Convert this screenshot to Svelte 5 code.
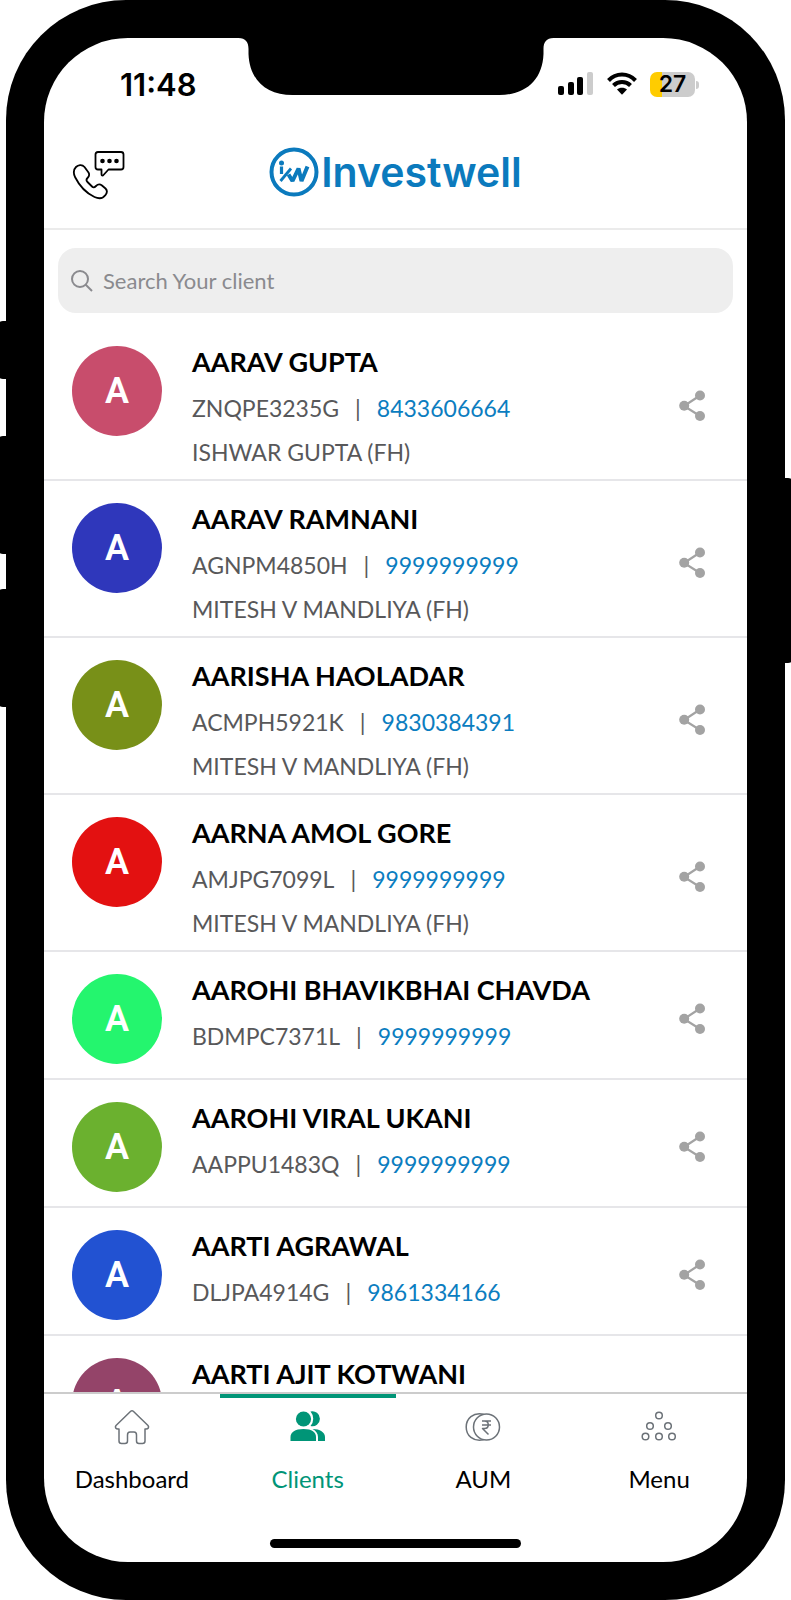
<script>
  let search = "";
  let activeTab = "Clients";

  const tabs = ["Dashboard", "Clients", "AUM", "Menu"];

  const clients = [
    { name: "AARAV GUPTA", pan: "ZNQPE3235G", phone: "8433606664", head: "ISHWAR GUPTA (FH)", color: "#c84d6c" },
    { name: "AARAV RAMNANI", pan: "AGNPM4850H", phone: "9999999999", head: "MITESH V MANDLIYA (FH)", color: "#2f37bb" },
    { name: "AARISHA HAOLADAR", pan: "ACMPH5921K", phone: "9830384391", head: "MITESH V MANDLIYA (FH)", color: "#789018" },
    { name: "AARNA AMOL GORE", pan: "AMJPG7099L", phone: "9999999999", head: "MITESH V MANDLIYA (FH)", color: "#e31111" },
    { name: "AAROHI BHAVIKBHAI CHAVDA", pan: "BDMPC7371L", phone: "9999999999", color: "#24f56e" },
    { name: "AAROHI VIRAL UKANI", pan: "AAPPU1483Q", phone: "9999999999", color: "#6bb12f" },
    { name: "AARTI AGRAWAL", pan: "DLJPA4914G", phone: "9861334166", color: "#2252d2" },
    { name: "AARTI AJIT KOTWANI", color: "#944469" }
  ];

  $: filtered = clients.filter((c) => c.name.includes(search.toUpperCase()));
</script>

<div class="page">
  <div class="phone">
    <span class="side-key mute"></span>
    <span class="side-key vol-up"></span>
    <span class="side-key vol-down"></span>
    <span class="side-key power"></span>

    <div class="screen">
      <svg class="notch" width="315" height="57" viewBox="0 0 315 57" aria-hidden="true">
        <path d="M0 0C7 0 10 4 10 11V16C11 42 28 57 54 57H261C287 57 304 42 305 16V11C305 4 308 0 315 0Z" />
      </svg>

      <div class="status-bar">
        <span class="time">11:48</span>
        <div class="status-icons">
          <svg width="36" height="24" viewBox="0 0 36 24" aria-hidden="true">
            <rect x="0" y="14" width="6" height="9" rx="2" />
            <rect x="10" y="10" width="6" height="13" rx="2" />
            <rect x="19" y="5" width="6" height="18" rx="2" />
            <rect x="29" y="0" width="6" height="23" rx="2" fill="#ccc" />
          </svg>
          <svg width="30" height="24" viewBox="0 0 30 24" fill="none" stroke="#000" stroke-width="4" aria-hidden="true">
            <path d="M1.5 8.5C9 .6 21 .6 28.5 8.5" />
            <path d="M6.5 13.5C11 8.8 19 8.8 23.5 13.5" />
            <path d="M10 17.5C12.5 15.3 17.5 15.3 20 17.5L15 22.8Z" fill="#000" stroke="none" />
          </svg>
          <div class="battery">27</div>
        </div>
      </div>

      <header>
        <button class="support" aria-label="Contact support">
          <svg width="54" height="50" viewBox="0 0 54 50" fill="none" stroke="#000" stroke-width="1.8" stroke-linejoin="round" aria-hidden="true">
            <path d="M26 2H49Q51.5 2 51.5 4.5V17Q51.5 19.5 49 19.5H36.5L31 25.5Q29.5 26 29.5 24V19.5H26Q23.5 19.5 23.5 17V4.5Q23.5 2 26 2Z" />
            <g fill="#000" stroke="none">
              <circle cx="30.5" cy="11" r="2.3" />
              <circle cx="37.5" cy="11" r="2.3" />
              <circle cx="44.5" cy="11" r="2.3" />
            </g>
            <path d="M4 17C6 15 10 14 12.5 17L16.5 22.5C18 25 17 26.5 15.5 28C14 29.5 14 30.5 15.5 32L20 36.5C21.5 38 22.5 37.5 24 36C26 34 28 34 30 35.5L33.5 38.5C36 41 35 43 33.5 45C31 48.5 27 49 22.5 47C14 43 7 35 3 27C1 22.5 2 19 4 17Z" />
          </svg>
        </button>
        <div class="logo">
          <svg width="50" height="50" viewBox="0 0 50 50" fill="none" stroke="#0b7abd" aria-hidden="true">
            <circle cx="25" cy="25" r="22.5" stroke-width="4" />
            <circle cx="12.5" cy="16" r="2.5" fill="#0b7abd" stroke="none" />
            <path d="M12.5 19.500V27" stroke-width="3.2" />
            <path d="M11.5 34L22 21.5" stroke-width="2.8" />
            <path d="M19.5 27.5L23.5 34L29.5 21.5L32.5 34L38.5 19.5" stroke-width="4" stroke-linejoin="bevel" />
          </svg>
          <span>Investwell</span>
        </div>
      </header>

      <main>
        <label class="search">
          <svg width="22" height="22" viewBox="0 0 22 22" fill="none" stroke="#8a8a8e" stroke-width="2" aria-hidden="true">
            <circle cx="9" cy="9" r="8" />
            <path d="M14.5 14.5L21 21" />
          </svg>
          <input type="text" placeholder="Search Your client" aria-label="Search your client" bind:value={search} />
        </label>

        <ul class="clients">
          {#each filtered as client}
            <li>
              <div class="avatar" style="background-color: {client.color}">A</div>
              <div class="info">
                <div class="name">{client.name}</div>
                {#if client.pan}
                  <div class="detail">
                    <span>{client.pan}</span>
                    <span>|</span>
                    <a href="tel:{client.phone}">{client.phone}</a>
                  </div>
                {/if}
                {#if client.head}
                  <div class="detail">{client.head}</div>
                {/if}
              </div>
              {#if client.pan}
                <button class="share" aria-label="Share {client.name}">
                  <svg width="26" height="32" viewBox="0 0 26 32" fill="#a3a3a3" aria-hidden="true">
                    <path d="M21 5.5L5 16L21 26" fill="none" stroke="#a3a3a3" stroke-width="2.2" />
                    <circle cx="21" cy="5.5" r="5" />
                    <circle cx="5.2" cy="15.8" r="5" />
                    <circle cx="21" cy="26" r="5" />
                  </svg>
                </button>
              {/if}
            </li>
          {/each}
        </ul>
      </main>

      <nav>
        {#each tabs as tab}
          <button class="tab" class:active={activeTab === tab} on:click={() => (activeTab = tab)}>
            <svg width="36" height="36" viewBox="0 0 36 36" fill="none" stroke="#6c7278" stroke-width="1.5" stroke-linejoin="round" aria-hidden="true">
              {#if tab === "Dashboard"}
                <path d="M16.7 2.3Q18 1 19.3 2.3L34 16.5C35.5 18.5 34 20 32 20H31V32Q31 34.5 28.5 34.5H25Q22.5 34.5 22.5 32V26Q22.5 23 20 23H16Q13.5 23 13.5 26V32Q13.5 34.5 11 34.5H7.5Q5 34.5 5 32V20H4C2 20 .5 18.5 2 16.5Z" />
              {:else if tab === "Clients"}
                <g fill="#009577" stroke="none">
                  <path d="M20.5 2.5A7.5 7.5 0 1 1 20.5 17A11 11 0 0 0 20.5 2.5Z" />
                  <path d="M22.5 20C30 20 35 23.5 35 28V32H28V28C28 24.5 26 22 22.5 20Z" />
                  <circle cx="13.5" cy="10" r="7.6" />
                  <path d="M.5 32V28C.5 23.5 5 20 13.5 20S26 23.5 26 28V32Z" />
                </g>
              {:else if tab === "AUM"}
                <circle cx="21.5" cy="18" r="13" />
                <path d="M18.5 5.2C8 3 1.2 9.5 1.2 18S8 33 18.5 30.8" />
                <path d="M17 12H26M17 16H26M17 12H19.5C24.5 12 24.5 19.5 19.5 19.5H17.5L23.5 25.5" />
              {:else}
                <circle cx="18" cy="6.5" r="3.3" />
                <circle cx="9" cy="17" r="3.3" />
                <circle cx="27" cy="17" r="3.3" />
                <circle cx="4.5" cy="27.5" r="3.3" />
                <circle cx="18" cy="27.5" r="3.3" />
                <circle cx="31" cy="27.5" r="3.3" />
              {/if}
            </svg>
            <span>{tab}</span>
          </button>
        {/each}
      </nav>
      <div class="home-bar"></div>
    </div>
  </div>
</div>

<style>
  :global(body) {
    background-color: #fff;
    overflow-x: hidden;
  }

  .page {
    padding: 0 6px;
    font-family: Lato, "Liberation Sans", sans-serif;
    color: #000;
  }

  .phone {
    position: relative;
    box-sizing: border-box;
    height: 100vh;
    padding: 38px;
    background-color: #000;
    border-radius: 120px;
  }

  .side-key {
    position: absolute;
    left: -9px;
    width: 20px;
    height: 118px;
    background-color: #000;
    border-radius: 6px;
  }

  .mute {
    top: 321px;
    height: 58px;
  }

  .vol-up {
    top: 436px;
  }

  .vol-down {
    top: 589px;
  }

  .power {
    top: 478px;
    left: auto;
    right: -9px;
    height: 185px;
  }

  .screen {
    position: relative;
    display: flex;
    flex-direction: column;
    height: 100%;
    background-color: #fff;
    border-radius: 84px;
    overflow: hidden;
  }

  .notch {
    position: absolute;
    top: 0;
    left: 50%;
    transform: translateX(-50%);
  }

  .status-bar {
    display: flex;
    justify-content: space-between;
    align-items: center;
    height: 92px;
    padding: 0 48px 0 76px;
  }

  .time {
    font-family: Inter, sans-serif;
    font-size: 31px;
    font-weight: 600;
  }

  .status-icons {
    display: flex;
    align-items: center;
    gap: 13px;
  }

  .battery {
    position: relative;
    width: 45px;
    margin-right: 4px;
    background: linear-gradient(to right, #ffcc00 12px, #ccc 12px);
    border-radius: 7px;
    font-family: Inter, sans-serif;
    font-size: 23px;
    font-weight: 600;
    line-height: 25px;
    text-align: center;
  }

  .battery::after {
    content: "";
    position: absolute;
    top: 9px;
    right: -4px;
    width: 3px;
    height: 8px;
    background-color: #ccc;
    border-radius: 0 3px 3px 0;
  }

  header {
    display: grid;
    grid-template-columns: 1fr auto 1fr;
    align-items: center;
    height: 84px;
    padding: 0 28px 14px;
    border-bottom: 2px solid #ebebeb;
  }

  button {
    padding: 0;
    border: none;
    background: none;
    font: inherit;
    color: inherit;
    cursor: pointer;
  }

  .support {
    justify-self: start;
    padding-top: 6px;
    line-height: 0;
  }

  .logo {
    display: flex;
    align-items: center;
    gap: 2px;
    font-family: Inter, sans-serif;
    font-size: 41px;
    font-weight: 600;
    line-height: 50px;
    color: #0b7abd;
  }

  main {
    flex: 1;
    min-height: 0;
    overflow: hidden;
  }

  .search {
    display: flex;
    align-items: center;
    gap: 10px;
    height: 65px;
    margin: 18px 14px 11px;
    padding: 0 13px;
    background-color: #eee;
    border-radius: 18px;
  }

  .search input {
    flex: 1;
    padding: 0;
    border: none;
    outline: none;
    background: none;
    font: inherit;
    font-size: 22px;
  }

  .search input::placeholder {
    color: #8a8a8e;
    opacity: 1;
  }

  .clients {
    margin: 0;
    padding: 0;
    list-style: none;
  }

  li {
    display: flex;
    align-items: flex-start;
    padding: 0 42px 0 28px;
    border-bottom: 2px solid #e6e6e9;
  }

  .avatar {
    width: 90px;
    margin: 22px 30px 14px 0;
    border-radius: 50%;
    font-family: Roboto, sans-serif;
    font-size: 36px;
    font-weight: 600;
    line-height: 90px;
    text-align: center;
    color: #fff;
  }

  .info {
    flex: 1;
    padding: 22px 0 5px;
  }

  .name {
    margin-bottom: 8px;
    font-size: 27px;
    font-weight: 700;
    line-height: 32px;
  }

  .detail {
    display: flex;
    gap: 16px;
    font-size: 23px;
    line-height: 44px;
    color: #58585a;
  }

  .detail a {
    color: #0b7dc0;
    text-decoration: none;
  }

  .share {
    align-self: stretch;
    padding-top: 8px;
    line-height: 0;
  }

  nav {
    display: flex;
    border-top: 2px solid #ccc;
  }

  .tab {
    display: flex;
    flex: 1;
    flex-direction: column;
    align-items: center;
    gap: 18px;
    padding: 11px 0 22px;
    border-top: 4px solid transparent;
    font-size: 24px;
    line-height: 32px;
  }

  .tab.active {
    border-top-color: #009577;
    color: #009577;
  }

  .home-bar {
    width: 251px;
    height: 9px;
    margin: 22px auto 14px;
    background-color: #000;
    border-radius: 5px;
  }
</style>
